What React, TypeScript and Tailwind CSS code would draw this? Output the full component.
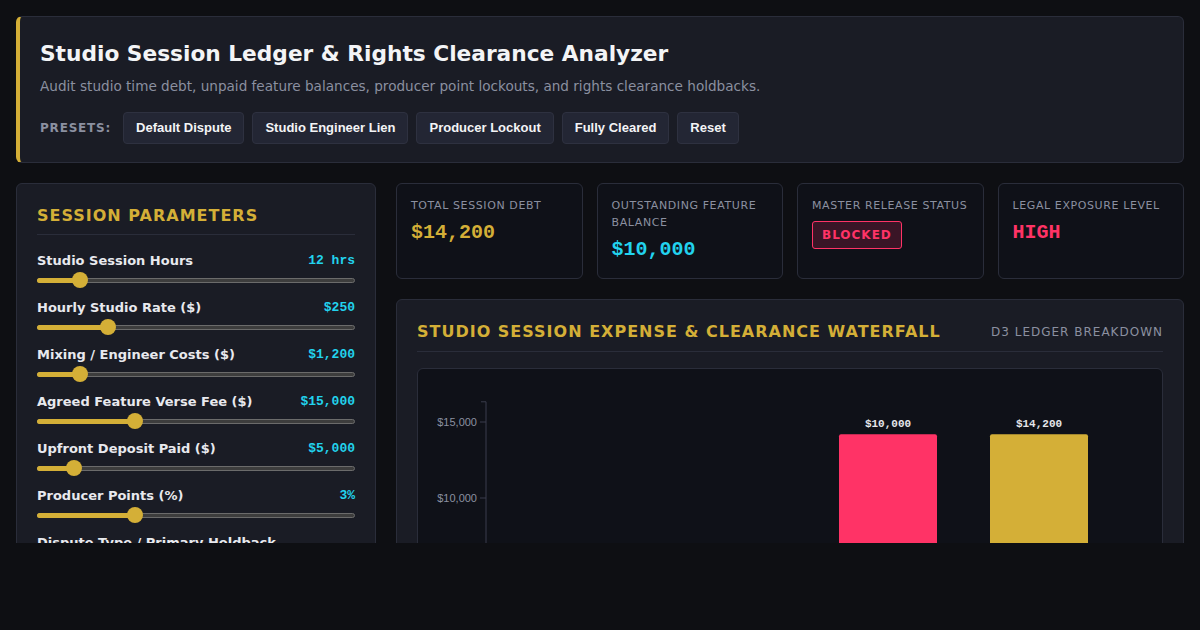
import React from 'react';

const presets = ['Default Dispute', 'Studio Engineer Lien', 'Producer Lockout', 'Fully Cleared', 'Reset'];

const params = [
  { label: 'Studio Session Hours', value: '12 hrs', frac: 0.117 },
  { label: 'Hourly Studio Rate ($)', value: '$250', frac: 0.21 },
  { label: 'Mixing / Engineer Costs ($)', value: '$1,200', frac: 0.117 },
  { label: 'Agreed Feature Verse Fee ($)', value: '$15,000', frac: 0.3 },
  { label: 'Upfront Deposit Paid ($)', value: '$5,000', frac: 0.097 },
  { label: 'Producer Points (%)', value: '3%', frac: 0.3 },
];

const SANS = 'font-["DejaVu_Sans",sans-serif]';
const MONO = 'font-["Liberation_Mono",monospace]';

function Slider({ frac }: { frac: number }) {
  const center = 8 + frac * 300;
  return (
    <div className="relative mt-[2px] h-4 w-[318px]">
      <div className="absolute left-0 right-0 top-[6px] h-[5px] rounded-full border border-[#6b6b6b] bg-[#3d3d3d]" />
      <div className="absolute left-0 top-[6px] h-[5px] rounded-full bg-[#d4af37]" style={{ width: center }} />
      <div className="absolute top-0 h-4 w-4 rounded-full bg-[#d4af37]" style={{ left: center - 8 }} />
    </div>
  );
}

function StatCard({ label, children }: { label: string; children: React.ReactNode }) {
  return (
    <div className="h-[96px] rounded-md border border-[#2a2d3a] bg-[#0f1118] px-[14px] pt-[13px]">
      <div className={`${SANS} text-[11px] uppercase leading-[17px] tracking-[0.6px] text-[#8b90a0]`}>{label}</div>
      <div className="mt-[4px]">{children}</div>
    </div>
  );
}

function Waterfall() {
  // y scale: value -> px inside svg (svg top = page y 369)
  const y = (v: number) => 650 - (v * 76) / 5000 - 369;
  const bars = [
    { x: 537, from: 0, to: 3000, color: '#22d3ee', label: '$3,000' },
    { x: 688, from: 3000, to: 4200, color: '#a78bfa', label: '$1,200' },
    { x: 839, from: 4200, to: 14200, color: '#ff3366', label: '$10,000' },
    { x: 990, from: 0, to: 14200, color: '#d4af37', label: '$14,200' },
  ];
  const ox = 418;
  return (
    <svg width="744" height="320" className="block">
      <line x1={486 - ox} x2={486 - ox} y1={y(16330)} y2={320} stroke="#3a3d4c" />
      <line x1={481 - ox} x2={486 - ox} y1={y(16330)} y2={y(16330)} stroke="#3a3d4c" />
      {[15000, 10000, 5000].map((v) => (
        <g key={v}>
          <line x1={480 - ox} x2={486 - ox} y1={y(v)} y2={y(v)} stroke="#3a3d4c" />
          <text x={477 - ox} y={y(v)} dy="0.32em" textAnchor="end" fill="#8b90a0" fontSize="11" fontFamily="Liberation Sans, sans-serif">
            ${v.toLocaleString('en-US')}
          </text>
        </g>
      ))}
      {bars.map((b) => (
        <g key={b.x}>
          <rect x={b.x - ox} y={y(b.to)} width={98} height={y(b.from) - y(b.to)} rx={2} fill={b.color} />
          <text x={b.x - ox + 49} y={y(b.to) - 7} textAnchor="middle" fill="#e5e7eb" fontSize="11" fontWeight="bold" fontFamily="Liberation Mono, monospace">
            {b.label}
          </text>
        </g>
      ))}
    </svg>
  );
}

export default function App() {
  return (
    <div className="min-h-screen w-full bg-[#0e0f13]">
      <div className="h-[543px] overflow-hidden p-4">
        {/* Header */}
        <div className="rounded-md border border-l-4 border-[#2a2d3a] border-l-[#d4af37] bg-[#1a1c25] pb-[18px] pl-5 pr-6 pt-[22px]">
          <h1 className={`${SANS} text-[21.7px] font-bold leading-[30px] text-[#f3f4f6]`}>
            Studio Session Ledger &amp; Rights Clearance Analyzer
          </h1>
          <p className={`${SANS} mt-[7px] text-[13.6px] leading-5 text-[#8b90a0]`}>
            Audit studio time debt, unpaid feature balances, producer point lockouts, and rights clearance holdbacks.
          </p>
          <div className="mt-[16px] flex items-center gap-2">
            <span className={`${SANS} mr-[4px] text-[12px] font-bold tracking-[0.8px] text-[#8b90a0]`}>PRESETS:</span>
            {presets.map((p) => (
              <button
                key={p}
                className='h-8 rounded border border-[#2e3140] bg-[#232634] px-[12px] font-["Liberation_Sans",sans-serif] text-[13px] font-bold text-[#f3f4f6]'
              >
                {p}
              </button>
            ))}
          </div>
        </div>

        <div className="mt-5 flex gap-5">
          {/* Left panel */}
          <div className="h-[400px] w-[360px] shrink-0 rounded-md border border-[#2a2d3a] bg-[#1a1c25] px-5 pt-[22px]">
            <h2 className={`${SANS} text-[16px] font-bold leading-5 tracking-[1px] text-[#d4af37]`}>SESSION PARAMETERS</h2>
            <div className="mt-[8px] h-px bg-[#2a2d3a]" />
            <div className="mt-[17px] flex flex-col gap-[11px]">
              {params.map((p) => (
                <div key={p.label}>
                  <div className="flex h-[18px] items-center justify-between">
                    <span className={`${SANS} text-[13px] font-bold leading-[18px] text-[#e8e9ee]`}>{p.label}</span>
                    <span className={`${MONO} text-[13px] font-bold leading-[18px] text-[#22d3ee]`}>{p.value}</span>
                  </div>
                  <Slider frac={p.frac} />
                </div>
              ))}
              <div className={`${SANS} text-[13px] font-bold leading-[18px] text-[#e8e9ee]`}>Dispute Type / Primary Holdback</div>
            </div>
          </div>

          {/* Right column */}
          <div className="flex min-w-0 flex-1 flex-col gap-5">
            <div className="grid grid-cols-4 gap-[14px]">
              <StatCard label="Total Session Debt">
                <span className={`${MONO} text-[20px] font-bold text-[#d4af37]`}>$14,200</span>
              </StatCard>
              <StatCard label="Outstanding Feature Balance">
                <span className={`${MONO} text-[20px] font-bold text-[#22d3ee]`}>$10,000</span>
              </StatCard>
              <StatCard label="Master Release Status">
                <span className={`${SANS} mt-[3px] inline-block rounded-[3px] border border-[#ff3366] bg-[#3a1526] px-[9px] py-[4px] text-[12px] font-bold tracking-[1px] text-[#ff3366]`}>
                  BLOCKED
                </span>
              </StatCard>
              <StatCard label="Legal Exposure Level">
                <span className={`${MONO} text-[20px] font-bold text-[#ff3366]`}>HIGH</span>
              </StatCard>
            </div>

            <div className="h-[400px] rounded-md border border-[#2a2d3a] bg-[#1a1c25] px-5 pt-[22px]">
              <div className="flex items-center justify-between">
                <h2 className={`${SANS} text-[16px] font-bold leading-5 tracking-[1px] text-[#d4af37]`}>
                  STUDIO SESSION EXPENSE &amp; CLEARANCE WATERFALL
                </h2>
                <span className={`${SANS} text-[12px] tracking-[1px] text-[#8b90a0]`}>D3 LEDGER BREAKDOWN</span>
              </div>
              <div className="mt-[9px] h-px bg-[#2a2d3a]" />
              <div className="mt-4 h-[300px] overflow-hidden rounded-md border border-[#2a2d3a] bg-[#0f1118]">
                <Waterfall />
              </div>
            </div>
          </div>
        </div>
      </div>
    </div>
  );
}
